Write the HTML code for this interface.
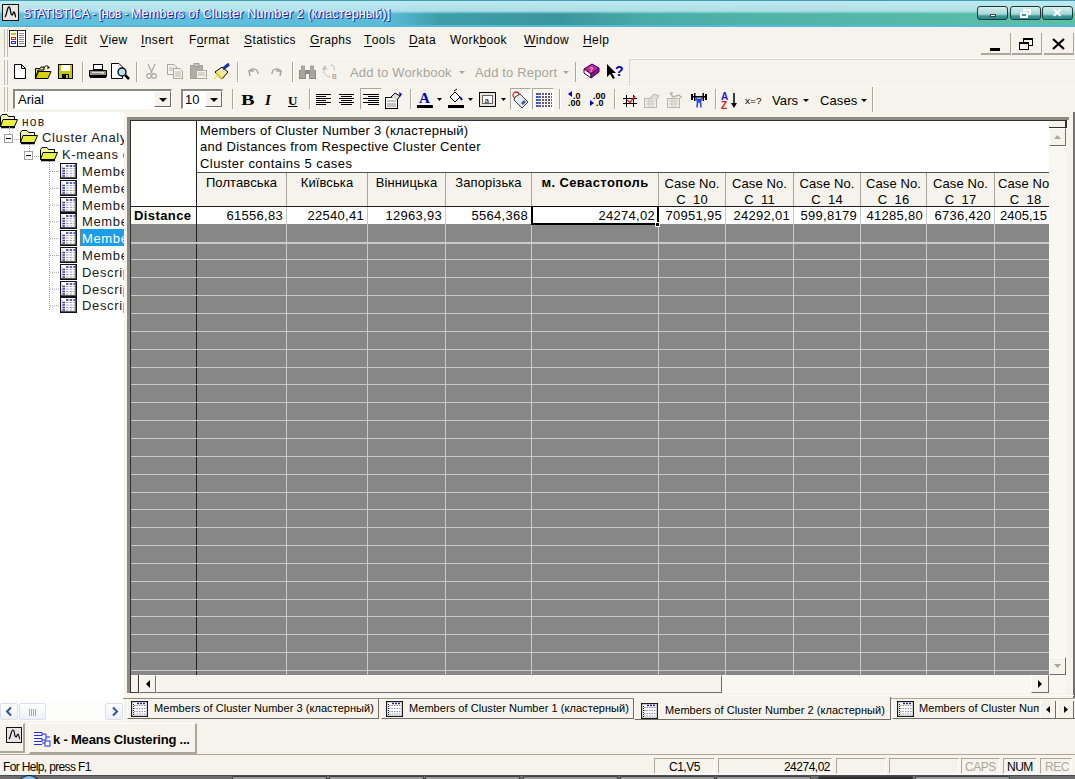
<!DOCTYPE html>
<html><head><meta charset="utf-8">
<style>
*{box-sizing:border-box;margin:0;padding:0}
html,body{width:1075px;height:779px;overflow:hidden;background:#F5F3EB;font-family:"Liberation Sans",sans-serif;color:#000}
.a{position:absolute}
.t{position:absolute;white-space:nowrap;line-height:1}
svg{position:absolute;overflow:visible}
/* title */
#title{left:0;top:0;width:1075px;height:27px;
background:
linear-gradient(180deg,#3aa0b8 0,#3aa0b8 1px,rgba(200,236,242,0.95) 1px,rgba(184,228,236,0.9) 11px,rgba(184,228,236,0) 14px),
linear-gradient(180deg,rgba(0,0,0,0) 25px,#56b8d8 25px,#56b8d8 27px),
linear-gradient(90deg,#62c0dc 0,#5cbcd8 385px,#3e9ea8 440px,#3a969e 560px,#4aaca8 650px,#52b4a8 800px,#5cc0a4 1075px);}
.tbtn{position:absolute;top:6px;width:31px;height:14px;border:1px solid #203838;border-radius:3px;
background:linear-gradient(180deg,#d4eeee 0,#a8d8d8 7px,#3a9a9a 9px,#1f8080 13px)}
.grip{position:absolute;width:4px;border-left:1px solid #c0bdb0;border-right:1px solid #c0bdb0}
.sep{position:absolute;width:2px;border-left:1px solid #aca899;border-right:1px solid #fff}
.menu{position:absolute;top:34px;font-size:12px;letter-spacing:0.4px;line-height:1;white-space:nowrap}
.menu u{text-decoration:none;border-bottom:1px solid #000;display:inline-block;line-height:11px}
.dtxt{position:absolute;font-size:13px;color:#a7a59c;white-space:nowrap;letter-spacing:0.15px;line-height:1}
.mdib{position:absolute;top:33px;width:30px;height:22px;border-right:1px solid #aca899;border-bottom:2px solid #aca899}
</style></head><body>

<!-- TITLE BAR -->
<div id="title" class="a"></div>
<div class="a" style="left:2px;top:4px;width:17px;height:17px;border:1px solid #111;background:#e8e4e4">
 <svg width="15" height="15" style="left:0;top:0"><path d="M2 12 C4 10 4 2 6 2 C8 2 7 10 9 10 C10 10 10 7 11 7 C12 7 12 12 13 12" stroke="#000" stroke-width="1.3" fill="none"/></svg>
</div>
<div class="t" style="left:23px;top:8px;font-size:12.5px;color:#fff;letter-spacing:-0.4px;text-shadow:1px 0 0 #3030b0,1px 1px 0 #2020a0">STATISTICA - [нов - </div><div class="t" style="left:131px;top:8px;font-size:12.5px;color:#fff;letter-spacing:0.2px;text-shadow:1px 0 0 #3030b0,1px 1px 0 #2020a0">Members of Cluster Number 2 (кластерный)]</div>
<div class="tbtn" style="left:977px"><div class="a" style="left:12px;top:7px;width:6px;height:3px;background:#fff;border:1px solid #444"></div></div>
<div class="tbtn" style="left:1010px"><div class="a" style="left:12px;top:2px;width:8px;height:6px;border:2px solid #fff;border-top-width:2px"></div>
<div class="a" style="left:9px;top:5px;width:8px;height:6px;border:2px solid #fff;background:#3a9a9a"></div></div>
<div class="tbtn" style="left:1042px"><div class="t" style="left:9px;top:0px;font-size:12px;font-weight:bold;color:#fff">✕</div></div>

<!-- MENU BAR -->
<div class="grip" style="left:4px;top:29px;height:28px"></div>
<div class="a" style="left:9px;top:30px;width:17px;height:17px;border:1px solid #222;background:#fff">
 <div class="a" style="left:7px;top:0;width:1px;height:15px;background:#222"></div>
 <div class="a" style="left:1px;top:2px;width:5px;height:2px;background:#c8c800"></div>
 <div class="a" style="left:1px;top:6px;width:5px;height:3px;border:1px solid #d02020"></div>
 <div class="a" style="left:1px;top:10px;width:5px;height:3px;border:1px solid #2030c0"></div>
 <div class="a" style="left:9px;top:2px;width:5px;height:11px;background:repeating-linear-gradient(180deg,#888 0,#888 1px,#fff 1px,#fff 2px)"></div>
</div>
<div class="menu" style="left:33px"><u>F</u>ile</div>
<div class="menu" style="left:65px"><u>E</u>dit</div>
<div class="menu" style="left:100px"><u>V</u>iew</div>
<div class="menu" style="left:141px"><u>I</u>nsert</div>
<div class="menu" style="left:189px">F<u>o</u>rmat</div>
<div class="menu" style="left:244px"><u>S</u>tatistics</div>
<div class="menu" style="left:310px"><u>G</u>raphs</div>
<div class="menu" style="left:364px"><u>T</u>ools</div>
<div class="menu" style="left:409px"><u>D</u>ata</div>
<div class="menu" style="left:450px">Work<u>b</u>ook</div>
<div class="menu" style="left:524px"><u>W</u>indow</div>
<div class="menu" style="left:583px"><u>H</u>elp</div>
<div class="mdib" style="left:981px"><div class="a" style="left:9px;top:15px;width:10px;height:3px;background:#000"></div></div>
<div class="mdib" style="left:1012px"><div class="a" style="left:11px;top:5px;width:10px;height:8px;border:1px solid #000;border-top-width:2px"></div>
<div class="a" style="left:7px;top:9px;width:10px;height:8px;border:1px solid #000;border-top-width:2px;background:#F5F3EB"></div></div>
<div class="mdib" style="left:1044px"><svg width="14" height="12" style="left:8px;top:5px"><path d="M1 1 L12 11 M12 1 L1 11" stroke="#000" stroke-width="2.2"/></svg></div>
<div class="a" style="left:0;top:58px;width:1075px;height:1px;background:#fbfaf6"></div>


<!-- TOOLBAR 1 -->
<div class="grip" style="left:4px;top:60px;height:25px"></div>
<svg width="12" height="15" style="left:14px;top:64px"><path d="M0.5 0.5 H7.5 L11.5 4.5 V14.5 H0.5 Z" fill="#fff" stroke="#000"/><path d="M7.5 0.5 V4.5 H11.5" fill="none" stroke="#000"/></svg>
<svg width="17" height="14" style="left:35px;top:65px"><path d="M0.5 3.5 H5 L6 2 H9 V5 H3 L0.5 13.5 Z" fill="#e8e070" stroke="#000"/><path d="M0.5 13.5 L3.5 6.5 H16 L13 13.5 Z" fill="#d8d000" stroke="#000"/><path d="M9 3 C10 0 13 0 14 3" stroke="#000" fill="none"/><path d="M13 1 L15 3 L12 4z" fill="#000"/></svg>
<svg width="15" height="15" style="left:58px;top:64px"><rect x="0.5" y="0.5" width="14" height="14" fill="#c8c800" stroke="#000"/><rect x="3" y="1" width="9" height="6" fill="#fff"/><rect x="4" y="10" width="7" height="5" fill="#000"/><rect x="8" y="11" width="2" height="3" fill="#c8c800"/></svg>
<div class="sep" style="left:82px;top:62px;height:20px"></div>
<svg width="18" height="15" style="left:89px;top:64px"><rect x="4.5" y="0.5" width="9" height="5" fill="#fff" stroke="#000"/><path d="M0.5 6.5 H17.5 V12.5 H0.5 Z" fill="#909090" stroke="#000"/><rect x="1" y="11" width="16" height="3" fill="#000"/><rect x="3" y="8" width="12" height="1" fill="#ddd"/><rect x="12" y="9" width="3" height="1" fill="#e0e000"/></svg>
<svg width="19" height="16" style="left:111px;top:63px"><path d="M0.5 0.5 H8 L11.5 4 V15.5 H0.5 Z" fill="#fff" stroke="#000"/><circle cx="11" cy="9" r="4" fill="#b8e0f0" stroke="#000" stroke-width="1.3"/><path d="M14 12 L18 16" stroke="#000" stroke-width="2.5"/></svg>
<div class="sep" style="left:136px;top:62px;height:20px"></div>
<svg width="11" height="15" style="left:146px;top:64px"><path d="M2 0 L6 9 M9 0 L5 9" stroke="#a8a69c" stroke-width="1.2" fill="none"/><circle cx="3" cy="12" r="2.3" fill="none" stroke="#a8a69c" stroke-width="1.2"/><circle cx="8" cy="12" r="2.3" fill="none" stroke="#a8a69c" stroke-width="1.2"/></svg>
<svg width="16" height="15" style="left:167px;top:64px"><path d="M0.5 0.5 H7 L9.5 3 V10.5 H0.5Z" fill="#f4f2ea" stroke="#a8a69c"/><path d="M6.5 4.5 H13 L15.5 7 V14.5 H6.5Z" fill="#f4f2ea" stroke="#a8a69c"/><path d="M8 8h6M8 10h6M8 12h6M2 4h5M2 6h5" stroke="#b8b6ac"/></svg>
<svg width="17" height="16" style="left:190px;top:63px"><rect x="0.5" y="2.5" width="12" height="13" fill="#b0aea4" stroke="#a0a098"/><rect x="4" y="0.5" width="5" height="3" fill="#c8c6bc" stroke="#a0a098"/><rect x="6.5" y="7.5" width="10" height="8" fill="#f4f2ea" stroke="#a8a69c"/><path d="M8 10h7M8 12h7" stroke="#b8b6ac"/></svg>
<svg width="18" height="17" style="left:213px;top:63px"><path d="M2 9 L9 16 L15 9 L9 4 Z" fill="#f0e8a0" stroke="#000" stroke-width="1"/><path d="M3 10 L9 16" stroke="#d8c020" stroke-width="2"/><path d="M10 6 L16 1" stroke="#2030a0" stroke-width="3"/><path d="M5 12 L1 16" stroke="#e0e000"/></svg>
<div class="sep" style="left:237px;top:62px;height:20px"></div>
<svg width="13" height="10" style="left:247px;top:67px"><path d="M3 9 L2 4 L7 4" fill="none" stroke="#a8a69c" stroke-width="1.5"/><path d="M2 4 C5 1 11 1 11 7" fill="none" stroke="#a8a69c" stroke-width="1.5"/></svg>
<svg width="13" height="10" style="left:270px;top:67px"><path d="M10 9 L11 4 L6 4" fill="none" stroke="#a8a69c" stroke-width="1.5"/><path d="M11 4 C8 1 2 1 2 7" fill="none" stroke="#a8a69c" stroke-width="1.5"/></svg>
<div class="sep" style="left:292px;top:62px;height:20px"></div>
<svg width="17" height="14" style="left:299px;top:65px"><rect x="0.5" y="5.5" width="6" height="8" fill="#a8a69c" stroke="#8c8a80"/><rect x="10.5" y="5.5" width="6" height="8" fill="#a8a69c" stroke="#8c8a80"/><rect x="2" y="0.5" width="4" height="6" fill="#a8a69c"/><rect x="11" y="0.5" width="4" height="6" fill="#a8a69c"/><rect x="6" y="5" width="5" height="4" fill="#8c8a80"/></svg>
<svg width="17" height="16" style="left:322px;top:64px"><path d="M3 2 L1 5 L3 5 M2 5 C1 9 3 12 8 13" fill="none" stroke="#a8a69c" stroke-dasharray="1.5 1"/><path d="M9 1 C12 1 13 4 12 7" fill="none" stroke="#a8a69c" stroke-dasharray="1.5 1"/><text x="10" y="15" font-size="7" font-family="Liberation Sans" fill="#8c8a80">B</text><text x="1" y="6" font-size="6" font-family="Liberation Sans" fill="#a8a69c">A</text></svg>
<div class="dtxt" style="left:350px;top:66px">Add to Workbook</div>
<svg width="6" height="3" style="left:459px;top:71px"><path d="M0 0H6L3 3Z" fill="#a7a59c"/></svg>
<div class="dtxt" style="left:475px;top:66px">Add to Report</div>
<svg width="6" height="3" style="left:563px;top:71px"><path d="M0 0H6L3 3Z" fill="#a7a59c"/></svg>
<div class="sep" style="left:575px;top:62px;height:20px"></div>
<svg width="17" height="16" style="left:583px;top:63px"><path d="M1 6 L9 1 L16 5 L8 11 Z" fill="#c020c0" stroke="#400040"/><path d="M1 6 L1 10 L8 15 L8 11Z" fill="#ffffff" stroke="#400040"/><path d="M8 11 L16 5 V9 L8 15Z" fill="#901090" stroke="#400040"/><text x="6" y="9" font-size="7" font-weight="bold" font-family="Liberation Sans" fill="#f0e000">?</text></svg>
<svg width="18" height="17" style="left:606px;top:63px"><path d="M1 1 L1 14 L4 11 L7 16 L9 15 L6 10 L10 10 Z" fill="#000"/><text x="9" y="13" font-size="14" font-weight="bold" font-family="Liberation Sans" fill="#0000c0">?</text></svg>
<div class="a" style="left:629px;top:59px;width:446px;height:27px;border-left:1px solid #d8d5c8;border-top:1px solid #d8d5c8;background:#F5F3EB"></div>
<div class="a" style="left:0;top:86px;width:1075px;height:1px;background:#fbfaf6"></div>

<!-- TOOLBAR 2 -->
<div class="grip" style="left:4px;top:87px;height:25px"></div>
<div class="a" style="left:13px;top:89px;width:159px;height:20px;border-top:2px solid #8c8a84;border-left:2px solid #8c8a84;border-bottom:1px solid #fff;border-right:1px solid #fff;background:#fff"></div>
<div class="t" style="left:18px;top:93px;font-size:13px">Arial</div>
<div class="a" style="left:154px;top:91px;width:17px;height:16px;background:#F5F3EB;border-right:1px solid #716f64;border-bottom:1px solid #716f64;border-top:1px solid #fff;border-left:1px solid #fff"><svg width="8" height="4" style="left:4px;top:6px"><path d="M0 0H8L4 4Z" fill="#000"/></svg></div>
<div class="a" style="left:181px;top:89px;width:42px;height:20px;border-top:2px solid #8c8a84;border-left:2px solid #8c8a84;border-bottom:1px solid #fff;border-right:1px solid #fff;background:#fff"></div>
<div class="t" style="left:185px;top:93px;font-size:13px">10</div>
<div class="a" style="left:205px;top:91px;width:17px;height:16px;background:#F5F3EB;border-right:1px solid #716f64;border-bottom:1px solid #716f64;border-top:1px solid #fff;border-left:1px solid #fff"><svg width="8" height="4" style="left:4px;top:6px"><path d="M0 0H8L4 4Z" fill="#000"/></svg></div>
<div class="sep" style="left:232px;top:89px;height:20px"></div>
<div class="t" style="left:241px;top:92px;font:bold 15px 'Liberation Serif';transform:scaleX(1.35);transform-origin:0 0">B</div>
<div class="t" style="left:265px;top:92px;font:bold italic 15px 'Liberation Serif'">I</div>
<div class="t" style="left:288px;top:93px;font:bold 13px 'Liberation Serif';text-decoration:underline">U</div>
<div class="sep" style="left:309px;top:89px;height:20px"></div>
<svg width="15" height="11" style="left:316px;top:94px"><path d="M0 0.5H15M0 2.5H10M0 4.5H15M0 6.5H10M0 8.5H15M0 10.5H10" stroke="#000"/></svg>
<svg width="15" height="11" style="left:339px;top:94px"><path d="M0 0.5H15M2 2.5H13M0 4.5H15M2 6.5H13M0 8.5H15M2 10.5H13" stroke="#000"/></svg>
<div class="a" style="left:360px;top:88px;width:22px;height:22px;border-top:1px solid #aca899;border-left:1px solid #aca899;border-right:1px solid #fff;border-bottom:1px solid #fff;background:#f8f7f2"></div>
<svg width="16" height="11" style="left:363px;top:94px"><path d="M0 0.5H16M5 2.5H16M0 4.5H16M5 6.5H16M0 8.5H16M5 10.5H16" stroke="#000"/></svg>
<svg width="18" height="17" style="left:385px;top:92px"><rect x="0.5" y="5.5" width="12" height="11" fill="#fff" stroke="#000"/><path d="M2 9h9M2 12h9M2 14h9" stroke="#888"/><path d="M6 5 L10 1 L15 4 L12 8" fill="#ddd" stroke="#000"/><path d="M14 0 L17 2 L15 5Z" fill="#0000c0"/></svg>
<div class="sep" style="left:410px;top:89px;height:20px"></div>
<div class="t" style="left:419px;top:90px;font:bold 15px 'Liberation Serif';color:#0000b0">A</div>
<div class="a" style="left:417px;top:105px;width:16px;height:3px;background:#000"></div>
<svg width="5" height="3" style="left:437px;top:98px"><path d="M0 0H5L2.5 3Z" fill="#000"/></svg>
<svg width="16" height="12" style="left:448px;top:91px"><path d="M2 6 L7 1 L12 6 L7 11Z" fill="#fff" stroke="#000"/><path d="M6 0 L9 -2" stroke="#000"/><path d="M12 6 L14 9" stroke="#0000c0" stroke-width="2"/></svg>
<div class="a" style="left:448px;top:105px;width:16px;height:3px;background:#000"></div>
<svg width="5" height="3" style="left:468px;top:98px"><path d="M0 0H5L2.5 3Z" fill="#000"/></svg>
<svg width="17" height="15" style="left:479px;top:92px"><rect x="0.5" y="0.5" width="16" height="14" fill="#e8e6dc" stroke="#000"/><rect x="3.5" y="3.5" width="10" height="8" fill="#fff" stroke="#666"/><text x="5.5" y="10.5" font-size="8" font-family="Liberation Sans">a</text></svg>
<svg width="5" height="3" style="left:501px;top:98px"><path d="M0 0H5L2.5 3Z" fill="#000"/></svg>
<div class="a" style="left:510px;top:88px;width:21px;height:22px;border-top:1px solid #aca899;border-left:1px solid #aca899;border-right:1px solid #fff;border-bottom:1px solid #fff;background:#f8f7f2"></div>
<svg width="18" height="18" style="left:511px;top:91px"><circle cx="5" cy="4" r="3" fill="none" stroke="#e02020" stroke-width="1.3"/><path d="M4 6 L9 3 L17 11 L11 17 L3 9Z" fill="#e8e8f0" stroke="#404040"/><path d="M10 12 L13 9 L15 11 L12 14Z" fill="#4060c0"/></svg>
<div class="a" style="left:532px;top:88px;width:22px;height:22px;border-top:1px solid #aca899;border-left:1px solid #aca899;border-right:1px solid #fff;border-bottom:1px solid #fff;background:#f8f7f2"></div>
<svg width="16" height="15" style="left:536px;top:93px"><path d="M0 1H16M0 4H16M0 7H16M0 10H16M0 13H16" stroke="#303050" stroke-width="1.6" stroke-dasharray="2 1"/><path d="M0 1H3M0 4H3M0 7H3M0 10H3M0 13H3" stroke="#3050e0" stroke-width="1.6"/></svg>
<div class="sep" style="left:559px;top:89px;height:20px"></div>
<svg width="16" height="16" style="left:567px;top:91px"><path d="M5 0 L1 3 L5 6Z" fill="#0000c0"/><text x="6" y="7.5" font-size="9" font-weight="bold" font-family="Liberation Sans">.0</text><text x="1" y="15" font-size="9" font-weight="bold" font-family="Liberation Sans">.00</text></svg>
<svg width="17" height="16" style="left:589px;top:91px"><text x="4" y="7.5" font-size="9" font-weight="bold" font-family="Liberation Sans">.00</text><path d="M5 9 L1 12 L5 15Z" fill="#0000c0" transform="rotate(180 3 12)"/><text x="7" y="15" font-size="9" font-weight="bold" font-family="Liberation Sans">.0</text></svg>
<div class="sep" style="left:614px;top:89px;height:20px"></div>
<svg width="14" height="14" style="left:623px;top:94px"><path d="M3.5 1V13M10.5 1V13M0 4.5H14M0 9.5H14" stroke="#000"/><path d="M4 6 L7 8.5 L12 2" stroke="#e02020" stroke-width="1.3" fill="none"/></svg>
<svg width="17" height="16" style="left:644px;top:92px"><rect x="0.5" y="6.5" width="12" height="9" fill="#f0eee6" stroke="#b8b6ac"/><path d="M2 9h9M2 12h9M5 7v8M8 7v8" stroke="#c8c6bc"/><path d="M6 6 L10 2 L15 4 L12 8" fill="#e0ded6" stroke="#b8b6ac"/></svg>
<svg width="17" height="16" style="left:667px;top:92px"><rect x="0.5" y="6.5" width="12" height="9" fill="#f0eee6" stroke="#b8b6ac"/><path d="M2 9h9M2 12h9M5 7v8M8 7v8" stroke="#c8c6bc"/><path d="M3 1 L6 5 M3 1 L6 1 M6 5 L12 3 L15 6" fill="none" stroke="#b8b6ac" stroke-width="1.5"/></svg>
<svg width="18" height="17" style="left:690px;top:92px"><rect x="1" y="2" width="2" height="6" fill="#000"/><rect x="15" y="2" width="2" height="6" fill="#000"/><rect x="3" y="4" width="12" height="1.5" fill="#000"/><rect x="4" y="1" width="1.5" height="8" fill="#000"/><rect x="12.5" y="1" width="1.5" height="8" fill="#000"/><circle cx="9" cy="8" r="1.6" fill="#2040e0"/><path d="M6.5 5.5 L7.5 10 L7 15.5 M11.5 5.5 L10.5 10 L11 15.5 M7.5 10H10.5" stroke="#2040e0" stroke-width="1.5" fill="none"/></svg>
<div class="sep" style="left:715px;top:89px;height:20px"></div>
<svg width="17" height="17" style="left:721px;top:92px"><text x="0" y="8" font-size="10" font-weight="bold" font-family="Liberation Sans" fill="#2020c0">A</text><text x="0" y="16.5" font-size="10" font-weight="bold" font-family="Liberation Sans" fill="#d02020">Z</text><path d="M13 1 V14" stroke="#000" stroke-width="1.5"/><path d="M10 11 L13 16 L16 11Z" fill="#000"/></svg>
<div class="t" style="left:745px;top:96px;font-size:10px;letter-spacing:0.1px;color:#000;transform:scaleY(0.9)">x=?</div>
<div class="t" style="left:772px;top:94px;font-size:13px;letter-spacing:0.1px">Vars</div>
<svg width="6" height="3" style="left:803px;top:99px"><path d="M0 0H6L3 3Z" fill="#000"/></svg>
<div class="t" style="left:820px;top:94px;font-size:13px;letter-spacing:0.1px">Cases</div>
<svg width="6" height="3" style="left:861px;top:99px"><path d="M0 0H6L3 3Z" fill="#000"/></svg>
<div class="a" style="left:872px;top:87px;width:1px;height:25px;background:#aca899"></div>
<div class="a" style="left:873px;top:87px;width:1px;height:25px;background:#fff"></div>


<!-- TREE PANEL -->
<div class="a" style="left:0;top:112px;width:124px;height:590px;background:#fff"></div>
<svg width="18" height="14" style="left:0px;top:114px"><path d="M0.5 2.5 L2 0.5 H7 L8.5 2.5 H14.5 V12.5 H0.5Z" fill="#f4f8a8" stroke="#000"/><path d="M0.5 12.5 L3 5.5 H17.5 L14.5 12.5Z" fill="#e8f048" stroke="#000"/><path d="M1 13.5 H15" stroke="#000" stroke-width="1.5"/></svg>
<div class="t" style="left:22px;top:116px;font-size:12px;letter-spacing:1.2px;color:#202020">нов</div>
<svg width="70" height="200" style="left:0;top:126px"><path d="M9.5 1V8 M14 13.5H20 M29.5 18V25 M34 30.5H40 M49.5 35V185 M50 45.5H60 M50 62.3H60 M50 79.1H60 M50 95.9H60 M50 112.7H60 M50 129.5H60 M50 146.3H60 M50 163.1H60 M50 179.9H60" stroke="#a0a0a0" stroke-dasharray="1 1" fill="none"/></svg>
<div class="a" style="left:4px;top:134px;width:9px;height:9px;border:1px solid #a0a0a0;background:#fff"><div class="a" style="left:1px;top:3px;width:5px;height:1px;background:#000"></div></div>
<svg width="18" height="14" style="left:20px;top:130px"><path d="M0.5 2.5 L2 0.5 H7 L8.5 2.5 H14.5 V12.5 H0.5Z" fill="#f4f8a8" stroke="#000"/><path d="M0.5 12.5 L3 5.5 H17.5 L14.5 12.5Z" fill="#e8f048" stroke="#000"/><path d="M1 13.5 H15" stroke="#000" stroke-width="1.5"/></svg>
<div class="t" style="left:42px;top:131px;font-size:13px;letter-spacing:0.65px;color:#202020">Cluster Analysis</div>
<div class="a" style="left:24px;top:151px;width:9px;height:9px;border:1px solid #a0a0a0;background:#fff"><div class="a" style="left:1px;top:3px;width:5px;height:1px;background:#000"></div></div>
<svg width="18" height="14" style="left:40px;top:147px"><path d="M0.5 2.5 L2 0.5 H7 L8.5 2.5 H14.5 V12.5 H0.5Z" fill="#f4f8a8" stroke="#000"/><path d="M0.5 12.5 L3 5.5 H17.5 L14.5 12.5Z" fill="#e8f048" stroke="#000"/><path d="M1 13.5 H15" stroke="#000" stroke-width="1.5"/></svg>
<div class="t" style="left:62px;top:148px;font-size:13px;letter-spacing:0.65px;color:#202020">K-means clustering</div>
<svg width="17" height="16" style="left:60px;top:163px"><rect x="0.5" y="0.5" width="16" height="15" fill="#fff" stroke="#111"/><path d="M1 14.5H16M15.5 1V15" stroke="#555"/><path d="M2 2.5V14M15 2.5V14" stroke="#999" stroke-width="0.6"/><path d="M6 3H15" stroke="#2828a8" stroke-width="1.4" stroke-dasharray="2.5 1.2"/><path d="M6 5.5H15M6 8H15M6 10.5H15M6 13H15" stroke="#a0a0b0" stroke-width="1.2" stroke-dasharray="2.5 1.2"/><path d="M2.5 5.5H5M2.5 8H5M2.5 10.5H5M2.5 13H5" stroke="#3030b0" stroke-width="1.4"/></svg>
<div class="t" style="left:82px;top:165.0px;font-size:13px;letter-spacing:0.65px;color:#202020">Members</div>
<svg width="17" height="16" style="left:60px;top:180px"><rect x="0.5" y="0.5" width="16" height="15" fill="#fff" stroke="#111"/><path d="M1 14.5H16M15.5 1V15" stroke="#555"/><path d="M2 2.5V14M15 2.5V14" stroke="#999" stroke-width="0.6"/><path d="M6 3H15" stroke="#2828a8" stroke-width="1.4" stroke-dasharray="2.5 1.2"/><path d="M6 5.5H15M6 8H15M6 10.5H15M6 13H15" stroke="#a0a0b0" stroke-width="1.2" stroke-dasharray="2.5 1.2"/><path d="M2.5 5.5H5M2.5 8H5M2.5 10.5H5M2.5 13H5" stroke="#3030b0" stroke-width="1.4"/></svg>
<div class="t" style="left:82px;top:181.8px;font-size:13px;letter-spacing:0.65px;color:#202020">Members</div>
<svg width="17" height="16" style="left:60px;top:197px"><rect x="0.5" y="0.5" width="16" height="15" fill="#fff" stroke="#111"/><path d="M1 14.5H16M15.5 1V15" stroke="#555"/><path d="M2 2.5V14M15 2.5V14" stroke="#999" stroke-width="0.6"/><path d="M6 3H15" stroke="#2828a8" stroke-width="1.4" stroke-dasharray="2.5 1.2"/><path d="M6 5.5H15M6 8H15M6 10.5H15M6 13H15" stroke="#a0a0b0" stroke-width="1.2" stroke-dasharray="2.5 1.2"/><path d="M2.5 5.5H5M2.5 8H5M2.5 10.5H5M2.5 13H5" stroke="#3030b0" stroke-width="1.4"/></svg>
<div class="t" style="left:82px;top:198.6px;font-size:13px;letter-spacing:0.65px;color:#202020">Members</div>
<svg width="17" height="16" style="left:60px;top:213px"><rect x="0.5" y="0.5" width="16" height="15" fill="#fff" stroke="#111"/><path d="M1 14.5H16M15.5 1V15" stroke="#555"/><path d="M2 2.5V14M15 2.5V14" stroke="#999" stroke-width="0.6"/><path d="M6 3H15" stroke="#2828a8" stroke-width="1.4" stroke-dasharray="2.5 1.2"/><path d="M6 5.5H15M6 8H15M6 10.5H15M6 13H15" stroke="#a0a0b0" stroke-width="1.2" stroke-dasharray="2.5 1.2"/><path d="M2.5 5.5H5M2.5 8H5M2.5 10.5H5M2.5 13H5" stroke="#3030b0" stroke-width="1.4"/></svg>
<div class="t" style="left:82px;top:215.4px;font-size:13px;letter-spacing:0.65px;color:#202020">Members</div>
<svg width="17" height="16" style="left:60px;top:230px"><rect x="0.5" y="0.5" width="16" height="15" fill="#fff" stroke="#111"/><path d="M1 14.5H16M15.5 1V15" stroke="#555"/><path d="M2 2.5V14M15 2.5V14" stroke="#999" stroke-width="0.6"/><path d="M6 3H15" stroke="#2828a8" stroke-width="1.4" stroke-dasharray="2.5 1.2"/><path d="M6 5.5H15M6 8H15M6 10.5H15M6 13H15" stroke="#a0a0b0" stroke-width="1.2" stroke-dasharray="2.5 1.2"/><path d="M2.5 5.5H5M2.5 8H5M2.5 10.5H5M2.5 13H5" stroke="#3030b0" stroke-width="1.4"/></svg>
<div class="a" style="left:80px;top:229.2px;width:50px;height:17px;background:#1c9ee8;border:1px dotted #d06020"></div>
<div class="t" style="left:82px;top:232.2px;font-size:13px;letter-spacing:0.65px;color:#fff">Members</div>
<svg width="17" height="16" style="left:60px;top:247px"><rect x="0.5" y="0.5" width="16" height="15" fill="#fff" stroke="#111"/><path d="M1 14.5H16M15.5 1V15" stroke="#555"/><path d="M2 2.5V14M15 2.5V14" stroke="#999" stroke-width="0.6"/><path d="M6 3H15" stroke="#2828a8" stroke-width="1.4" stroke-dasharray="2.5 1.2"/><path d="M6 5.5H15M6 8H15M6 10.5H15M6 13H15" stroke="#a0a0b0" stroke-width="1.2" stroke-dasharray="2.5 1.2"/><path d="M2.5 5.5H5M2.5 8H5M2.5 10.5H5M2.5 13H5" stroke="#3030b0" stroke-width="1.4"/></svg>
<div class="t" style="left:82px;top:249.0px;font-size:13px;letter-spacing:0.65px;color:#202020">Members</div>
<svg width="17" height="16" style="left:60px;top:264px"><rect x="0.5" y="0.5" width="16" height="15" fill="#fff" stroke="#111"/><path d="M1 14.5H16M15.5 1V15" stroke="#555"/><path d="M2 2.5V14M15 2.5V14" stroke="#999" stroke-width="0.6"/><path d="M6 3H15" stroke="#2828a8" stroke-width="1.4" stroke-dasharray="2.5 1.2"/><path d="M6 5.5H15M6 8H15M6 10.5H15M6 13H15" stroke="#a0a0b0" stroke-width="1.2" stroke-dasharray="2.5 1.2"/><path d="M2.5 5.5H5M2.5 8H5M2.5 10.5H5M2.5 13H5" stroke="#3030b0" stroke-width="1.4"/></svg>
<div class="t" style="left:82px;top:265.8px;font-size:13px;letter-spacing:0.65px;color:#202020">Descriptive</div>
<svg width="17" height="16" style="left:60px;top:281px"><rect x="0.5" y="0.5" width="16" height="15" fill="#fff" stroke="#111"/><path d="M1 14.5H16M15.5 1V15" stroke="#555"/><path d="M2 2.5V14M15 2.5V14" stroke="#999" stroke-width="0.6"/><path d="M6 3H15" stroke="#2828a8" stroke-width="1.4" stroke-dasharray="2.5 1.2"/><path d="M6 5.5H15M6 8H15M6 10.5H15M6 13H15" stroke="#a0a0b0" stroke-width="1.2" stroke-dasharray="2.5 1.2"/><path d="M2.5 5.5H5M2.5 8H5M2.5 10.5H5M2.5 13H5" stroke="#3030b0" stroke-width="1.4"/></svg>
<div class="t" style="left:82px;top:282.6px;font-size:13px;letter-spacing:0.65px;color:#202020">Descriptive</div>
<svg width="17" height="16" style="left:60px;top:297px"><rect x="0.5" y="0.5" width="16" height="15" fill="#fff" stroke="#111"/><path d="M1 14.5H16M15.5 1V15" stroke="#555"/><path d="M2 2.5V14M15 2.5V14" stroke="#999" stroke-width="0.6"/><path d="M6 3H15" stroke="#2828a8" stroke-width="1.4" stroke-dasharray="2.5 1.2"/><path d="M6 5.5H15M6 8H15M6 10.5H15M6 13H15" stroke="#a0a0b0" stroke-width="1.2" stroke-dasharray="2.5 1.2"/><path d="M2.5 5.5H5M2.5 8H5M2.5 10.5H5M2.5 13H5" stroke="#3030b0" stroke-width="1.4"/></svg>
<div class="t" style="left:82px;top:299.4px;font-size:13px;letter-spacing:0.65px;color:#202020">Descriptive</div>

<!-- MDI AREA BG strip & SPREADSHEET FRAME -->
<div class="a" style="left:124px;top:112px;width:951px;height:586px;background:#F5F3EB"></div>
<div class="a" style="left:127px;top:117px;width:942px;height:576px;border-top:3px solid #8e8c82;border-left:3px solid #8e8c82;"></div>
<div class="a" style="left:130px;top:120px;width:937px;height:1px;background:#303030"></div>
<div class="a" style="left:130px;top:120px;width:1px;height:573px;background:#303030"></div>
<!-- grid -->
<div class="a" style="left:131px;top:121px;width:918px;height:103px;background:#fff"></div>
<div class="a" style="left:197px;top:173px;width:852px;height:33px;background:#F5F3EB"></div>
<div class="a" style="left:131px;top:207px;width:65px;height:17px;background:#FAF9F4"></div>
<div class="a" style="left:131px;top:224px;width:918px;height:451px;background:#878787"></div>
<div class="a" style="left:197px;top:172px;width:852px;height:1px;background:#505050"></div>
<div class="a" style="left:131px;top:206px;width:918px;height:1px;background:#202020"></div>
<div class="a" style="left:196px;top:121px;width:1px;height:554px;background:#202020"></div>
<div class="a" style="left:131px;top:242px;width:918px;height:2px;background:#cacaca"></div>
<div class="a" style="left:131px;top:259px;width:918px;height:1px;background:#cacaca"></div>
<div class="a" style="left:131px;top:277px;width:918px;height:1px;background:#cacaca"></div>
<div class="a" style="left:131px;top:295px;width:918px;height:1px;background:#cacaca"></div>
<div class="a" style="left:131px;top:313px;width:918px;height:1px;background:#cacaca"></div>
<div class="a" style="left:131px;top:331px;width:918px;height:1px;background:#cacaca"></div>
<div class="a" style="left:131px;top:349px;width:918px;height:1px;background:#cacaca"></div>
<div class="a" style="left:131px;top:367px;width:918px;height:1px;background:#cacaca"></div>
<div class="a" style="left:131px;top:384px;width:918px;height:1px;background:#cacaca"></div>
<div class="a" style="left:131px;top:402px;width:918px;height:1px;background:#cacaca"></div>
<div class="a" style="left:131px;top:420px;width:918px;height:1px;background:#cacaca"></div>
<div class="a" style="left:131px;top:438px;width:918px;height:1px;background:#cacaca"></div>
<div class="a" style="left:131px;top:456px;width:918px;height:1px;background:#cacaca"></div>
<div class="a" style="left:131px;top:474px;width:918px;height:1px;background:#cacaca"></div>
<div class="a" style="left:131px;top:492px;width:918px;height:1px;background:#cacaca"></div>
<div class="a" style="left:131px;top:509px;width:918px;height:1px;background:#cacaca"></div>
<div class="a" style="left:131px;top:527px;width:918px;height:1px;background:#cacaca"></div>
<div class="a" style="left:131px;top:545px;width:918px;height:1px;background:#cacaca"></div>
<div class="a" style="left:131px;top:563px;width:918px;height:1px;background:#cacaca"></div>
<div class="a" style="left:131px;top:581px;width:918px;height:1px;background:#cacaca"></div>
<div class="a" style="left:131px;top:599px;width:918px;height:1px;background:#cacaca"></div>
<div class="a" style="left:131px;top:616px;width:918px;height:1px;background:#cacaca"></div>
<div class="a" style="left:131px;top:634px;width:918px;height:1px;background:#cacaca"></div>
<div class="a" style="left:131px;top:652px;width:918px;height:1px;background:#cacaca"></div>
<div class="a" style="left:131px;top:670px;width:918px;height:1px;background:#cacaca"></div>
<div class="a" style="left:286px;top:173px;width:1px;height:33px;background:#a8a69c"></div>
<div class="a" style="left:286px;top:207px;width:1px;height:17px;background:#c8c8c8"></div>
<div class="a" style="left:286px;top:224px;width:1px;height:451px;background:#cacaca"></div>
<div class="a" style="left:367px;top:173px;width:1px;height:33px;background:#a8a69c"></div>
<div class="a" style="left:367px;top:207px;width:1px;height:17px;background:#c8c8c8"></div>
<div class="a" style="left:367px;top:224px;width:1px;height:451px;background:#cacaca"></div>
<div class="a" style="left:445px;top:173px;width:1px;height:33px;background:#a8a69c"></div>
<div class="a" style="left:445px;top:207px;width:1px;height:17px;background:#c8c8c8"></div>
<div class="a" style="left:445px;top:224px;width:1px;height:451px;background:#cacaca"></div>
<div class="a" style="left:531px;top:173px;width:1px;height:33px;background:#a8a69c"></div>
<div class="a" style="left:531px;top:207px;width:1px;height:17px;background:#c8c8c8"></div>
<div class="a" style="left:531px;top:224px;width:1px;height:451px;background:#cacaca"></div>
<div class="a" style="left:658px;top:173px;width:1px;height:33px;background:#a8a69c"></div>
<div class="a" style="left:658px;top:207px;width:1px;height:17px;background:#c8c8c8"></div>
<div class="a" style="left:658px;top:224px;width:1px;height:451px;background:#cacaca"></div>
<div class="a" style="left:725px;top:173px;width:1px;height:33px;background:#a8a69c"></div>
<div class="a" style="left:725px;top:207px;width:1px;height:17px;background:#c8c8c8"></div>
<div class="a" style="left:725px;top:224px;width:1px;height:451px;background:#cacaca"></div>
<div class="a" style="left:793px;top:173px;width:1px;height:33px;background:#a8a69c"></div>
<div class="a" style="left:793px;top:207px;width:1px;height:17px;background:#c8c8c8"></div>
<div class="a" style="left:793px;top:224px;width:1px;height:451px;background:#cacaca"></div>
<div class="a" style="left:860px;top:173px;width:1px;height:33px;background:#a8a69c"></div>
<div class="a" style="left:860px;top:207px;width:1px;height:17px;background:#c8c8c8"></div>
<div class="a" style="left:860px;top:224px;width:1px;height:451px;background:#cacaca"></div>
<div class="a" style="left:926px;top:173px;width:1px;height:33px;background:#a8a69c"></div>
<div class="a" style="left:926px;top:207px;width:1px;height:17px;background:#c8c8c8"></div>
<div class="a" style="left:926px;top:224px;width:1px;height:451px;background:#cacaca"></div>
<div class="a" style="left:994px;top:173px;width:1px;height:33px;background:#a8a69c"></div>
<div class="a" style="left:994px;top:207px;width:1px;height:17px;background:#c8c8c8"></div>
<div class="a" style="left:994px;top:224px;width:1px;height:451px;background:#cacaca"></div>
<div class="t" style="left:200px;top:123.5px;font-size:13px;letter-spacing:0.27px">Members of Cluster Number 3 (кластерный)</div><div class="t" style="left:200px;top:140px;font-size:13px;letter-spacing:0.31px">and Distances from Respective Cluster Center</div><div class="t" style="left:200px;top:157px;font-size:13px;letter-spacing:0.45px">Cluster contains 5 cases</div><div class="t" style="left:134px;top:209px;font-size:13px;font-weight:bold;letter-spacing:0.4px">Distance</div><div class="t" style="left:197px;top:175.5px;width:89px;text-align:center;font-size:13px;letter-spacing:0.1px">Полтавська</div><div class="t" style="left:197px;top:209px;width:86px;text-align:right;font-size:13px;letter-spacing:0.3px">61556,83</div><div class="t" style="left:287px;top:175.5px;width:80px;text-align:center;font-size:13px;letter-spacing:0.1px">Київська</div><div class="t" style="left:287px;top:209px;width:77px;text-align:right;font-size:13px;letter-spacing:0.3px">22540,41</div><div class="t" style="left:368px;top:175.5px;width:77px;text-align:center;font-size:13px;letter-spacing:0.1px">Вінницька</div><div class="t" style="left:368px;top:209px;width:74px;text-align:right;font-size:13px;letter-spacing:0.3px">12963,93</div><div class="t" style="left:446px;top:175.5px;width:85px;text-align:center;font-size:13px;letter-spacing:0.1px">Запорізька</div><div class="t" style="left:446px;top:209px;width:82px;text-align:right;font-size:13px;letter-spacing:0.3px">5564,368</div><div class="t" style="left:532px;top:175.5px;width:126px;text-align:center;font-size:13px;font-weight:bold;letter-spacing:0.4px">м. Севастополь</div><div class="t" style="left:532px;top:209px;width:123px;text-align:right;font-size:13px;letter-spacing:0.3px">24274,02</div><div class="t" style="left:659px;top:175.5px;width:66px;text-align:center;font-size:13px;letter-spacing:0.1px;line-height:16px;overflow:hidden">Case No.<br><span style="white-space:pre">C  10</span></div>
<div class="t" style="left:659px;top:209px;width:63px;text-align:right;font-size:13px;letter-spacing:0.3px">70951,95</div><div class="t" style="left:726px;top:175.5px;width:67px;text-align:center;font-size:13px;letter-spacing:0.1px;line-height:16px;overflow:hidden">Case No.<br><span style="white-space:pre">C  11</span></div>
<div class="t" style="left:726px;top:209px;width:64px;text-align:right;font-size:13px;letter-spacing:0.3px">24292,01</div><div class="t" style="left:794px;top:175.5px;width:66px;text-align:center;font-size:13px;letter-spacing:0.1px;line-height:16px;overflow:hidden">Case No.<br><span style="white-space:pre">C  14</span></div>
<div class="t" style="left:794px;top:209px;width:63px;text-align:right;font-size:13px;letter-spacing:0.3px">599,8179</div><div class="t" style="left:861px;top:175.5px;width:65px;text-align:center;font-size:13px;letter-spacing:0.1px;line-height:16px;overflow:hidden">Case No.<br><span style="white-space:pre">C  16</span></div>
<div class="t" style="left:861px;top:209px;width:62px;text-align:right;font-size:13px;letter-spacing:0.3px">41285,80</div><div class="t" style="left:927px;top:175.5px;width:67px;text-align:center;font-size:13px;letter-spacing:0.1px;line-height:16px;overflow:hidden">Case No.<br><span style="white-space:pre">C  17</span></div>
<div class="t" style="left:927px;top:209px;width:64px;text-align:right;font-size:13px;letter-spacing:0.3px">6736,420</div><div class="a" style="left:995px;top:173px;width:54px;height:33px;overflow:hidden"><div class="t" style="left:0;top:2.5px;width:61px;text-align:center;font-size:13px;letter-spacing:0.1px;line-height:16px">Case No.<br><span style="white-space:pre">C  18</span></div></div>
<div class="t" style="left:995px;top:209px;width:54px;overflow:hidden;font-size:13px;padding-left:5px">2405,15</div><div class="a" style="left:531px;top:206px;width:128px;height:19px;border:2px solid #000;border-top-width:1px"></div>
<div class="a" style="left:655px;top:222px;width:5px;height:5px;background:#000;border:1px solid #fff"></div>
<div class="a" style="left:1049px;top:121px;width:18px;height:554px;background:#F8F7F2"></div>
<div class="a" style="left:1049px;top:121px;width:17px;height:7px;border-right:1px solid #303030;border-bottom:1px solid #303030;background:#F5F3EB"></div>
<div class="a" style="left:1049px;top:128px;width:17px;height:18px;background:#F5F3EB;border-right:1px solid #716f64;border-bottom:1px solid #716f64;border-top:1px solid #fff;border-left:1px solid #fff"><svg width="7" height="4" style="left:4px;top:6px"><path d="M0 4H7L3.5 0Z" fill="#aca899"/></svg></div>
<div class="a" style="left:1049px;top:657px;width:17px;height:18px;background:#F5F3EB;border-right:1px solid #716f64;border-bottom:1px solid #716f64;border-top:1px solid #fff;border-left:1px solid #fff"><svg width="7" height="4" style="left:4px;top:6px"><path d="M0 0H7L3.5 4Z" fill="#aca899"/></svg></div>
<div class="a" style="left:1066px;top:120px;width:1px;height:8px;background:#303030"></div>
<div class="a" style="left:1073px;top:112px;width:2px;height:586px;background:#707070"></div>
<!-- horizontal scrollbar -->
<div class="a" style="left:131px;top:675px;width:935px;height:18px;background:#F8F7F2"></div>
<div class="a" style="left:131px;top:675px;width:8px;height:18px;background:#F5F3EB;border-right:1px solid #303030;border-bottom:1px solid #303030"></div>
<div class="a" style="left:130px;top:692px;width:26px;height:1px;background:#404040"></div>
<div class="a" style="left:124px;top:695px;width:950px;height:1px;background:#fbfaf6"></div>
<div class="a" style="left:139px;top:675px;width:17px;height:18px;background:#F5F3EB;border-right:1px solid #716f64;border-bottom:1px solid #716f64;border-top:1px solid #fff;border-left:1px solid #fff"><svg width="4" height="8" style="left:6px;top:4px"><path d="M4 0V8L0 4Z" fill="#000"/></svg></div>
<div class="a" style="left:156px;top:675px;width:566px;height:18px;background:#F5F3EB;border-right:1px solid #716f64;border-bottom:1px solid #716f64;border-top:1px solid #fff;border-left:1px solid #fff"></div>
<div class="a" style="left:1031px;top:675px;width:18px;height:18px;background:#F5F3EB;border-right:1px solid #716f64;border-bottom:1px solid #716f64;border-top:1px solid #fff;border-left:1px solid #fff"><svg width="4" height="8" style="left:6px;top:4px"><path d="M0 0V8L4 4Z" fill="#000"/></svg></div>


<!-- TREE H SCROLL -->
<div class="a" style="left:0;top:702px;width:124px;height:19px;background:#fcfcfa"></div>
<div class="a" style="left:0;top:703px;width:18px;height:17px;border:1px solid #d8e0f0;border-radius:2px;background:linear-gradient(180deg,#fff,#eef0f8)"><svg width="6" height="9" style="left:5px;top:3px"><path d="M5 0.5 L1 4.5 L5 8.5" stroke="#3050a0" stroke-width="2" fill="none"/></svg></div>
<div class="a" style="left:19px;top:703px;width:27px;height:17px;border:1px solid #d8e0f0;border-radius:2px;background:linear-gradient(180deg,#fff,#eef0f8)"><div class="a" style="left:9px;top:5px;width:7px;height:7px;background:repeating-linear-gradient(90deg,#a0a8c0 0,#a0a8c0 1px,transparent 1px,transparent 2px)"></div></div>
<div class="a" style="left:105px;top:703px;width:18px;height:17px;border:1px solid #d8e0f0;border-radius:2px;background:linear-gradient(180deg,#fff,#eef0f8)"><svg width="6" height="9" style="left:6px;top:3px"><path d="M1 0.5 L5 4.5 L1 8.5" stroke="#3050a0" stroke-width="2" fill="none"/></svg></div>
<!-- TAB STRIP -->
<div class="a" style="left:123px;top:698px;width:511px;height:1px;background:#8e8c82"></div>
<div class="a" style="left:891px;top:698px;width:184px;height:1px;background:#8e8c82"></div>
<div class="a" style="left:127px;top:699px;width:252px;height:20px;border-right:1px solid #716f64;border-bottom:1px solid #716f64;border-left:1px solid #fff"></div>
<div class="a" style="left:381px;top:699px;width:253px;height:20px;border-right:1px solid #716f64;border-bottom:1px solid #716f64;border-left:1px solid #fff"></div>
<div class="a" style="left:634px;top:697px;width:257px;height:23px;background:#F5F3EB;border-right:1px solid #716f64;border-bottom:1px solid #716f64;border-left:1px solid #fff"></div>
<div class="a" style="left:892px;top:698px;width:183px;height:21px;border-top:1px solid #aca899;border-bottom:1px solid #716f64;border-left:1px solid #fff"></div>
<svg width="17" height="16" style="left:131px;top:701px"><rect x="0.5" y="0.5" width="16" height="15" fill="#fff" stroke="#000"/><rect x="1" y="1" width="15" height="14" fill="none" stroke="#666" stroke-width="0.6"/><path d="M3 4.5H15M3 7.5H15M3 10.5H15M3 13H15" stroke="#9090b0" stroke-dasharray="1.5 1"/><path d="M6 2.5H15" stroke="#2020a0" stroke-width="1.5" stroke-dasharray="2 1"/><path d="M2.5 3V14" stroke="#2020a0" stroke-dasharray="1 1"/></svg><svg width="17" height="16" style="left:386px;top:701px"><rect x="0.5" y="0.5" width="16" height="15" fill="#fff" stroke="#000"/><rect x="1" y="1" width="15" height="14" fill="none" stroke="#666" stroke-width="0.6"/><path d="M3 4.5H15M3 7.5H15M3 10.5H15M3 13H15" stroke="#9090b0" stroke-dasharray="1.5 1"/><path d="M6 2.5H15" stroke="#2020a0" stroke-width="1.5" stroke-dasharray="2 1"/><path d="M2.5 3V14" stroke="#2020a0" stroke-dasharray="1 1"/></svg><svg width="17" height="16" style="left:641px;top:703px"><rect x="0.5" y="0.5" width="16" height="15" fill="#fff" stroke="#000"/><rect x="1" y="1" width="15" height="14" fill="none" stroke="#666" stroke-width="0.6"/><path d="M3 4.5H15M3 7.5H15M3 10.5H15M3 13H15" stroke="#9090b0" stroke-dasharray="1.5 1"/><path d="M6 2.5H15" stroke="#2020a0" stroke-width="1.5" stroke-dasharray="2 1"/><path d="M2.5 3V14" stroke="#2020a0" stroke-dasharray="1 1"/></svg><svg width="17" height="16" style="left:897px;top:701px"><rect x="0.5" y="0.5" width="16" height="15" fill="#fff" stroke="#000"/><rect x="1" y="1" width="15" height="14" fill="none" stroke="#666" stroke-width="0.6"/><path d="M3 4.5H15M3 7.5H15M3 10.5H15M3 13H15" stroke="#9090b0" stroke-dasharray="1.5 1"/><path d="M6 2.5H15" stroke="#2020a0" stroke-width="1.5" stroke-dasharray="2 1"/><path d="M2.5 3V14" stroke="#2020a0" stroke-dasharray="1 1"/></svg>
<div class="t" style="left:154px;top:703px;font-size:11px;letter-spacing:0.05px">Members of Cluster Number 3 (кластерный)</div>
<div class="t" style="left:409px;top:703px;font-size:11px;letter-spacing:0.05px">Members of Cluster Number 1 (кластерный)</div>
<div class="t" style="left:665px;top:705px;font-size:11px;letter-spacing:0.05px">Members of Cluster Number 2 (кластерный)</div>
<div class="a" style="left:919px;top:699px;width:120px;height:19px;overflow:hidden"><div class="t" style="left:0;top:4px;font-size:11px;letter-spacing:0.05px">Members of Cluster Number 4 (кластерный)</div></div>
<div class="a" style="left:1040px;top:701px;width:16px;height:17px;background:#F5F3EB;border-right:1px solid #716f64;border-left:1px solid #fff"><svg width="4" height="7" style="left:5px;top:5px"><path d="M4 0V7L0 3.5Z" fill="#000"/></svg></div>
<div class="a" style="left:1057px;top:701px;width:17px;height:17px;background:#F5F3EB;border-right:1px solid #716f64;border-left:1px solid #fff"><svg width="4" height="7" style="left:6px;top:5px"><path d="M0 0V7L4 3.5Z" fill="#000"/></svg></div>
<!-- WINDOW BAR -->

<div class="a" style="left:0;top:723px;width:25px;height:30px;border-right:2px solid #aca899;border-bottom:2px solid #aca899;border-top:1px solid #fff"></div>
<div class="a" style="left:6px;top:727px;width:16px;height:16px;border:1px solid #111;background:#e8e4e4"><svg width="14" height="14" style="left:0;top:0"><path d="M2 11 C4 9 4 2 6 2 C8 2 7 9 9 9 C10 9 10 6 11 6 C12 6 12 11 13 11" stroke="#000" stroke-width="1.2" fill="none"/></svg></div>
<div class="a" style="left:29px;top:723px;width:168px;height:31px;border-right:2px solid #aca899;border-bottom:2px solid #aca899;border-top:1px solid #fff;border-left:1px solid #fff"></div>
<svg width="17" height="16" style="left:34px;top:731px"><path d="M0 1.5H8M0 4.5H8M0 7.5H8M0 10.5H8M0 13.5H8M8 1.5V4.5M8 7.5V10.5M8 3H12V9H8M12 6H16M8 12H12V14" stroke="#2030e0" fill="none"/><rect x="11" y="10" width="5" height="5" fill="#fff" stroke="#2030e0"/></svg>
<div class="t" style="left:53px;top:733px;font-size:13px;font-weight:bold;letter-spacing:-0.2px">k - Means Clustering ...</div>
<!-- STATUS BAR -->
<div class="a" style="left:0;top:754px;width:1075px;height:1px;background:#aca899"></div>

<div class="t" style="left:3px;top:761px;font-size:12px;letter-spacing:-0.65px">For Help, press F1</div>
<div class="a" style="left:654px;top:758px;width:61px;height:16px;border-top:1px solid #aca899;border-left:1px solid #aca899;border-right:1px solid #fff;border-bottom:1px solid #fff"></div>
<div class="t" style="left:669px;top:761px;font-size:12px;letter-spacing:-0.5px">C1,V5</div>
<div class="a" style="left:718px;top:758px;width:114px;height:16px;border-top:1px solid #aca899;border-left:1px solid #aca899;border-right:1px solid #fff;border-bottom:1px solid #fff"></div>
<div class="t" style="left:718px;top:761px;width:112px;text-align:right;font-size:12px;letter-spacing:-0.5px">24274,02</div>
<div class="a" style="left:836px;top:758px;width:50px;height:16px;border-top:1px solid #aca899;border-left:1px solid #aca899;border-right:1px solid #fff;border-bottom:1px solid #fff"></div>
<div class="a" style="left:889px;top:758px;width:70px;height:16px;border-top:1px solid #aca899;border-left:1px solid #aca899;border-right:1px solid #fff;border-bottom:1px solid #fff"></div>
<div class="a" style="left:961px;top:758px;width:39px;height:16px;border-top:1px solid #aca899;border-left:1px solid #aca899;border-right:1px solid #fff;border-bottom:1px solid #fff"></div>
<div class="t" style="left:965px;top:761px;font-size:12px;letter-spacing:-0.5px;color:#aca899">CAPS</div>
<div class="a" style="left:1003px;top:758px;width:34px;height:16px;border-top:1px solid #aca899;border-left:1px solid #aca899;border-right:1px solid #fff;border-bottom:1px solid #fff"></div>
<div class="t" style="left:1007px;top:761px;font-size:12px;letter-spacing:-0.5px">NUM</div>
<div class="a" style="left:1040px;top:758px;width:32px;height:16px;border-top:1px solid #aca899;border-left:1px solid #aca899;border-right:1px solid #fff;border-bottom:1px solid #fff"></div>
<div class="t" style="left:1045px;top:761px;font-size:12px;letter-spacing:-0.5px;color:#aca899">REC</div>
<!-- TASKBAR -->
<div class="a" style="left:0;top:775px;width:1075px;height:4px;background:#6c6c6c;border-top:1px solid #4a4a5a"></div>
<div class="a" style="left:17px;top:775px;width:24px;height:12px;border-radius:12px 12px 0 0;background:radial-gradient(circle at 50% 70%,#c0e8f8,#3080c0);border:1px solid #202030"></div>
<div class="a" style="left:232px;top:776px;width:95px;height:4px;border:1px solid #404040;border-bottom:none;border-radius:2px 2px 0 0;background:#9a9a9a"></div>
<div class="a" style="left:329px;top:776px;width:95px;height:4px;border:1px solid #404040;border-bottom:none;border-radius:2px 2px 0 0;background:#9a9a9a"></div>
<div class="a" style="left:425px;top:776px;width:95px;height:4px;border:1px solid #404040;border-bottom:none;border-radius:2px 2px 0 0;background:#9a9a9a"></div>
<div class="a" style="left:523px;top:776px;width:95px;height:4px;border:1px solid #404040;border-bottom:none;border-radius:2px 2px 0 0;background:#9a9a9a"></div>
<div class="a" style="left:620px;top:776px;width:95px;height:4px;border:1px solid #404040;border-bottom:none;border-radius:2px 2px 0 0;background:#9a9a9a"></div>
<div class="a" style="left:716px;top:776px;width:95px;height:4px;border:1px solid #404040;border-bottom:none;border-radius:2px 2px 0 0;background:#9a9a9a"></div>
<div class="a" style="left:818px;top:776px;width:95px;height:4px;border:1px solid #404040;border-bottom:none;border-radius:2px 2px 0 0;background:#303030"></div>
<div class="a" style="left:915px;top:776px;width:95px;height:4px;border:1px solid #404040;border-bottom:none;border-radius:2px 2px 0 0;background:#9a9a9a"></div>
</body></html>
